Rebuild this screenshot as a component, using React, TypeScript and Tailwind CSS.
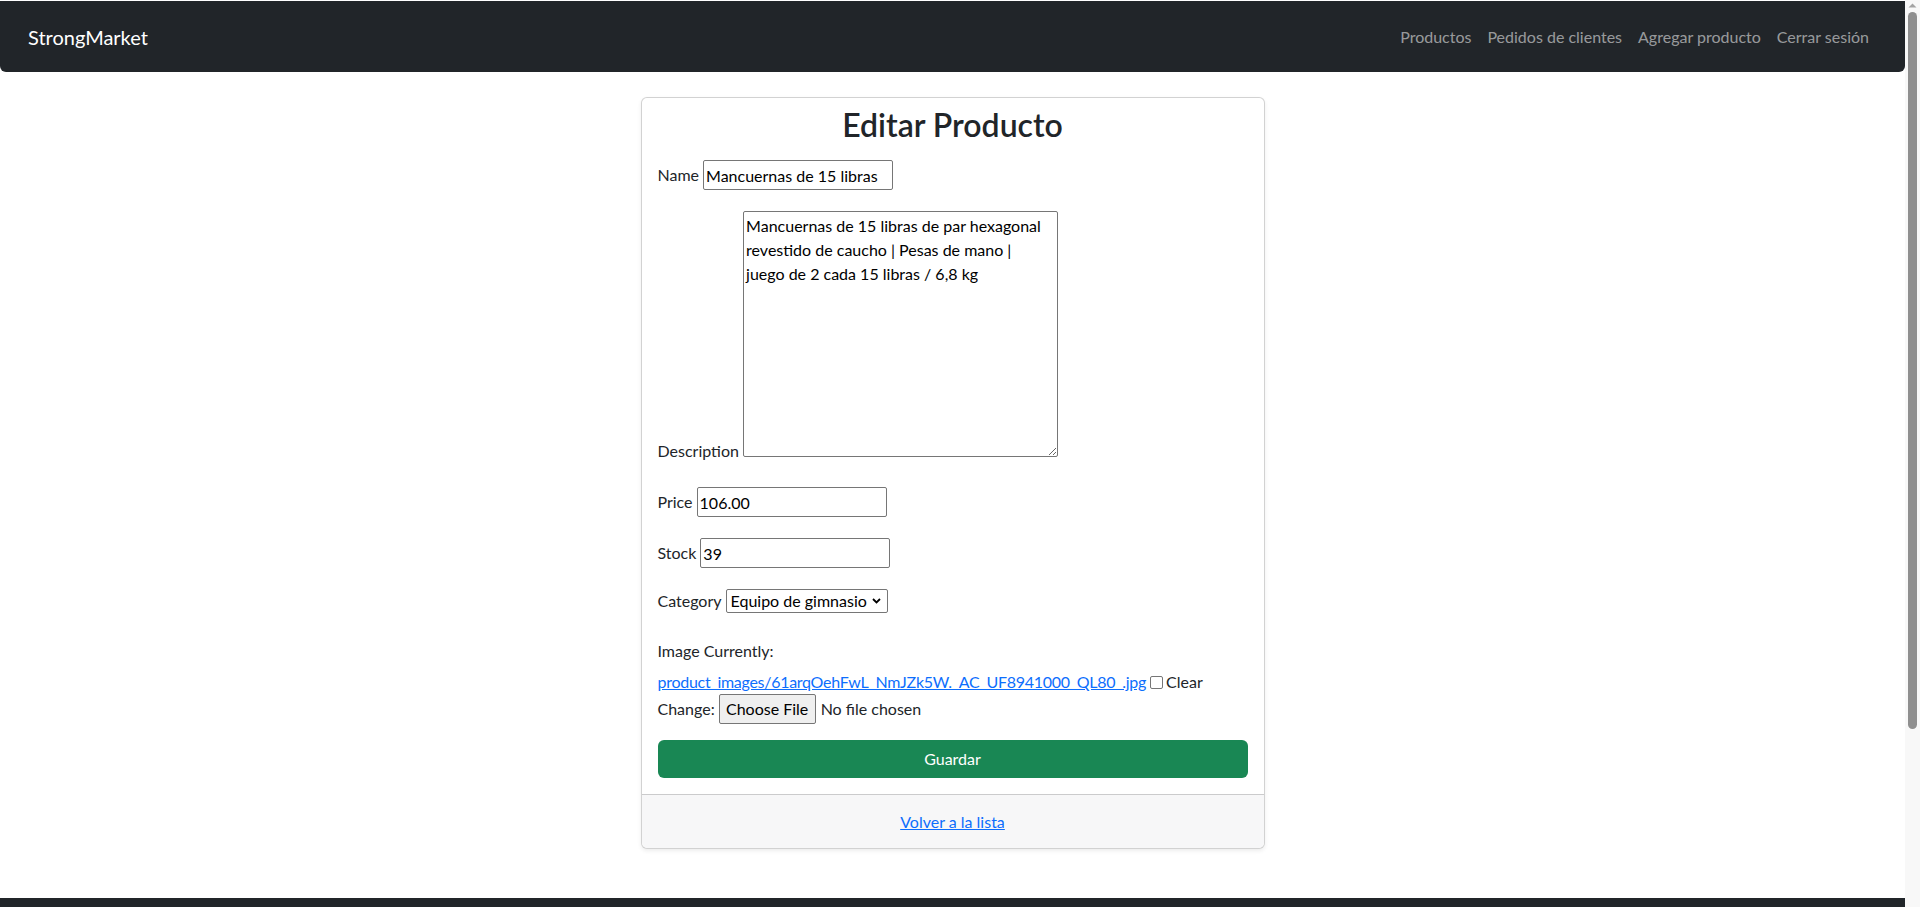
const navLinks = ["Productos", "Pedidos de clientes", "Agregar producto", "Cerrar sesión"];

const description =
  "Mancuernas de 15 libras de par hexagonal revestido de caucho | Pesas de mano |\njuego de 2 cada 15 libras / 6,8 kg";

function TextField({ label, value }: { label: string; value: string }) {
  return (
    <div className="flex h-[30px] items-center">
      <label className="mr-1">{label}</label>
      <input
        type="text"
        defaultValue={value}
        className="h-[30px] w-[190px] rounded-[2px] border border-[#767676] bg-white px-[2px] text-[#000] outline-none"
      />
    </div>
  );
}

function Scrollbar() {
  return (
    <div className="flex h-[907px] w-[15px] flex-col items-center bg-[#f8f8f8]">
      <svg width="15" height="12" viewBox="0 0 15 12" className="shrink-0">
        <path d="M3.5 7.5 L7.5 3.5 L11.5 7.5 Z" fill="#a3a3a3" />
      </svg>
      <div className="h-[717px] w-[9px] rounded-full bg-[#8f8f8f]" />
    </div>
  );
}

export default function App() {
  return (
    <div className="flex h-[907px] w-[1920px] overflow-hidden bg-white font-['Lato','Liberation_Sans',sans-serif] text-[16px] leading-6 text-[#212529]">
      <div className="flex w-[1905px] flex-col">
        {/* Navbar */}
        <nav className="mt-px flex h-[71px] shrink-0 items-center justify-between rounded-b-md bg-[#212529] px-[28px]">
          <a href="#" className="text-[20px] leading-[30px] text-white">
            StrongMarket
          </a>
          <ul className="flex">
            {navLinks.map((l) => (
              <li key={l}>
                <a href="#" className="block px-2 py-2 text-[rgba(255,255,255,0.55)]">
                  {l}
                </a>
              </li>
            ))}
          </ul>
        </nav>

        {/* Main */}
        <main className="flex flex-1 items-start justify-center">
          <div className="mt-[25px] w-[624px] rounded-md border border-[rgba(0,0,0,0.175)] bg-white shadow-[0_2px_4px_rgba(0,0,0,0.075)]">
            <div className="px-4 pt-[8px] pb-4">
              <h2 className="text-center text-[32px] font-semibold leading-[38px]">Editar Producto</h2>

              <form className="mt-4" onSubmit={(e) => e.preventDefault()}>
                <TextField label="Name" value="Mancuernas de 15 libras" />

                <div className="mt-[21px] h-[252px] leading-6">
                  <label>Description</label>{" "}
                  <textarea
                    rows={10}
                    defaultValue={description}
                    className="inline-block h-[246px] w-[315px] rounded-[2px] border border-[#767676] bg-white p-[2px] align-baseline text-[#000] outline-none"
                  />
                </div>

                <div className="mt-[24px]">
                  <TextField label="Price" value="106.00" />
                </div>
                <div className="mt-[21px]">
                  <TextField label="Stock" value="39" />
                </div>

                <div className="mt-[21px] flex h-[24px] items-center">
                  <label className="mr-1">Category</label>
                  <span className="flex h-[24px] w-[162px] items-center justify-between rounded-[2px] border border-[#767676] bg-white pl-[4px] pr-[6px] text-[#000]">
                    <span>Equipo de gimnasio</span>
                    <svg width="9" height="6" viewBox="0 0 9 6">
                      <path d="M1 1 L4.5 4.5 L8 1" fill="none" stroke="#000" strokeWidth="1.8" />
                    </svg>
                  </span>
                </div>

                <div className="mt-[26px]">Image Currently:</div>
                <div className="mt-[7px] flex h-6 items-center">
                  <a href="#" className="tracking-[-0.28px] text-[#0d6efd] underline">
                    product_images/61arqOehFwL_NmJZk5W._AC_UF8941000_QL80_.jpg
                  </a>
                  <span className="mr-[3px] ml-[4px] inline-block h-[13px] w-[13px] rounded-[2px] border border-[#767676] bg-white" />
                  <label>Clear</label>
                </div>
                <div className="flex h-[30px] items-center">
                  <span className="mr-1">Change:</span>
                  <button
                    type="button"
                    className="mr-[5px] h-[30px] w-[97px] rounded-[2px] border border-[#767676] bg-[#efefef] text-[#000]"
                  >
                    Choose File
                  </button>
                  <span>No file chosen</span>
                </div>

                <button
                  type="submit"
                  className="mt-4 h-[38px] w-full rounded-md bg-[#198754] text-white"
                >
                  Guardar
                </button>
              </form>
            </div>
            <div className="rounded-b-md border-t border-[rgba(0,0,0,0.175)] bg-[#f7f7f8] pt-[15px] pb-[14px] text-center">
              <a href="#" className="text-[#0d6efd] underline">
                Volver a la lista
              </a>
            </div>
          </div>
        </main>

        <footer className="h-[9px] shrink-0 bg-[#212529]" />
      </div>
      <Scrollbar />
    </div>
  );
}
